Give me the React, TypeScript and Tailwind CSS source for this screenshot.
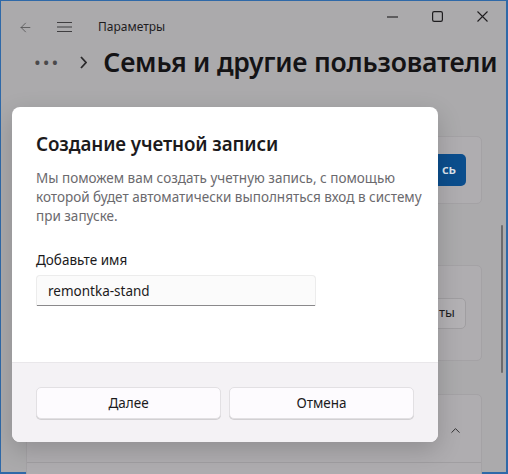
import { ArrowLeft, ChevronUp } from "lucide-react";

const font = { fontFamily: '"Noto Sans", "Open Sans", sans-serif' };

function Card({ className, children }: { className: string; children?: React.ReactNode }) {
  return (
    <div className={`rounded-[5px] border border-[#a4a2a5] bg-[#afadb0] ${className}`}>
      {children}
    </div>
  );
}

export default function App() {
  return (
    <div className="relative h-[474px] w-[508px] overflow-hidden bg-[#2f69a8]" style={font}>
      {/* settings window (dimmed behind dialog) */}
      <div className="ml-[1px] mr-[2px] mt-[1px] flex h-[471px] flex-col bg-[#abaaac]">
        <header className="flex h-[40px] items-start">
          <div className="flex items-center pt-[17px]">
            <ArrowLeft className="ml-[17px] h-[15px] w-[15px] text-[#4a494b]" strokeWidth={1.2} />
            <svg className="ml-[24px] h-[12px] w-[15px]" viewBox="0 0 15 12" fill="none" stroke="#3f3e40" strokeWidth="1.1">
              <path d="M0 1.5h15M0 6h15M0 10.5h15" />
            </svg>
            <span className="ml-[26px] text-[12px] text-[#1e1d1f]">Параметры</span>
          </div>
          <div className="ml-auto flex items-start pt-[10px] text-[#1e1d1f]">
            <svg className="mt-[5px] h-[2px] w-[11px]" viewBox="0 0 11 2" stroke="#1e1d1f" strokeWidth="1.1">
              <path d="M0 1h11" />
            </svg>
            <svg className="ml-[34px] h-[11px] w-[11px]" viewBox="0 0 11 11" fill="none" stroke="#1e1d1f" strokeWidth="1.2">
              <rect x="0.6" y="0.6" width="9.8" height="9.8" rx="1.6" />
            </svg>
            <svg className="ml-[34px] mr-[18px] h-[11px] w-[11px]" viewBox="0 0 11 11" fill="none" stroke="#1e1d1f" strokeWidth="1.1">
              <path d="M0.5 0.5l10 10M10.5 0.5l-10 10" />
            </svg>
          </div>
        </header>

        <div className="flex items-center pl-[33px] pt-[8px]">
          <span className="text-[18px] leading-none tracking-[2px] text-[#4a494b]">•••</span>
          <svg className="ml-[20px] h-[13px] w-[7px]" viewBox="0 0 7 13" fill="none" stroke="#2a292b" strokeWidth="1.8">
            <path d="M1 1l5 5.5L1 12" />
          </svg>
          <h1 className="ml-[16px] whitespace-nowrap text-[26.5px] font-semibold leading-[36px] tracking-[-0.2px] text-[#141315]">
            Семья и другие пользователи
          </h1>
        </div>

        <div className="flex flex-1 pl-[25px] pt-[56px]">
          <div className="flex w-[456px] flex-col">
            <Card className="flex h-[68px] items-center justify-end pr-[15px]">
              <div className="flex h-[32px] w-[90px] items-center justify-end rounded-[5px] bg-[#0b4e8d] pr-[10px] text-[13px] font-semibold text-[#dfe6ee]">
                сь
              </div>
            </Card>
            <Card className="mt-[61px] flex h-[96px] items-center justify-end pr-[15px]">
              <div className="flex h-[31px] w-[90px] items-center justify-end rounded-[5px] border border-[#a09ea1] bg-[#b3b1b4] pr-[10px] text-[13px] text-[#1e1d1f]">
                ты
              </div>
            </Card>
            <Card className="mt-[33px] flex h-[100px] flex-col rounded-b-none">
              <div className="flex h-[67px] items-center justify-end pr-[18px] pt-[4px]">
                <ChevronUp className="h-[15px] w-[15px] text-[#2a292b]" strokeWidth={1.5} />
              </div>
              <div className="border-t border-[#a09ea1]" />
            </Card>
          </div>
          <div className="ml-auto mr-[3px] mt-[89px] h-[148px] w-[2px] rounded-full bg-[#6c6b6d]" />
        </div>
      </div>

      {/* dialog */}
      <div className="absolute left-[12px] top-[107px] flex h-[335px] w-[426px] flex-col overflow-hidden rounded-[8px] bg-white shadow-[0_8px_24px_rgba(0,0,0,0.18)]">
        <div className="flex-1 px-[24px] pt-[23px]">
          <h2 className="text-[18.8px] font-semibold leading-[28px] tracking-[-0.1px] text-[#1b1a1c]">Создание учетной записи</h2>
          <p className="mt-[11px] whitespace-nowrap text-[13.5px] leading-[19px] text-[#6b6a6e]">
            Мы поможем вам создать учетную запись, с помощью
            <br />
            которой будет автоматически выполняться вход в систему
            <br />
            при запуске.
          </p>
          <label className="mt-[24px] block text-[13.5px] leading-[20px] text-[#1b1a1c]">Добавьте имя</label>
          <div className="mt-[5px] flex h-[31px] w-[280px] items-center rounded-t-[4px] border border-b-0 border-[#ececec] bg-[#fbfbfb] pl-[11px] text-[13.5px] text-[#1b1a1c] shadow-[inset_0_-1px_0_#8a898b]">
            remontka-stand
          </div>
        </div>
        <div className="flex h-[80px] gap-[8px] border-t border-[#e9e7ea] bg-[#f4f2f5] px-[24px] pt-[24px]">
          <button className="h-[32px] flex-1 rounded-[5px] border border-[#e2e0e3] bg-[#fdfbfe] text-[13.5px] text-[#1b1a1c] shadow-[0_1px_0_#d2d0d3]">
            Далее
          </button>
          <button className="h-[32px] flex-1 rounded-[5px] border border-[#e2e0e3] bg-[#fdfbfe] text-[13.5px] text-[#1b1a1c] shadow-[0_1px_0_#d2d0d3]">
            Отмена
          </button>
        </div>
      </div>
    </div>
  );
}
